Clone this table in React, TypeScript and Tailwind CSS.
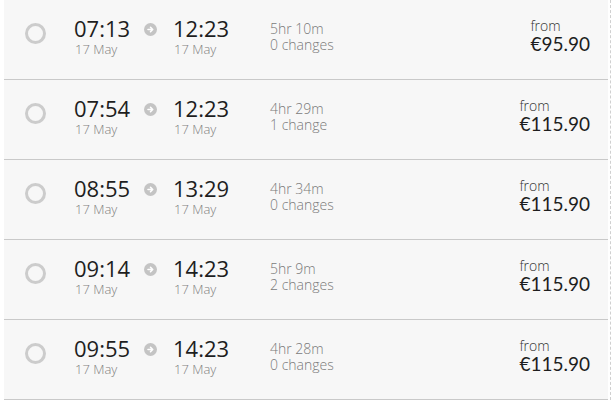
const journeys = [
  { dep: "07:13", arr: "12:23", dur: "5hr 10m", changes: "0 changes", price: "€95.90" },
  { dep: "07:54", arr: "12:23", dur: "4hr 29m", changes: "1 change", price: "€115.90" },
  { dep: "08:55", arr: "13:29", dur: "4hr 34m", changes: "0 changes", price: "€115.90" },
  { dep: "09:14", arr: "14:23", dur: "5hr 9m", changes: "2 changes", price: "€115.90" },
  { dep: "09:55", arr: "14:23", dur: "4hr 28m", changes: "0 changes", price: "€115.90" },
];

function ArrowDot() {
  return (
    <svg width="13" height="13" viewBox="0 0 13 13" className="mt-[8px]">
      <circle cx="6.5" cy="6.5" r="6.5" fill="#c4c4c4" />
      <path d="M4 6.5h4.5M6.5 4.3l2.2 2.2-2.2 2.2" stroke="#fff" strokeWidth="1.6" fill="none" strokeLinecap="round" strokeLinejoin="round" />
    </svg>
  );
}

function Row({ j }: { j: (typeof journeys)[number] }) {
  return (
    <div className="flex h-[80px] items-start border-b border-[#c9c9c9] pt-[15px]">
      <div className="ml-[21px] mt-[8px] h-[21px] w-[21px] rounded-full border-[3px] border-[#cccccc]" />
      <div className="ml-[28px] mt-[2px] flex w-[70px] flex-col">
        <span className="text-[22px] leading-[23px] text-[#1e1e1e]">{j.dep}</span>
        <span className="ml-[1px] mt-[2px] text-[13px] leading-[15px] font-light text-[#808080]">17 May</span>
      </div>
      <div>
        <ArrowDot />
      </div>
      <div className="ml-[16px] mt-[2px] flex w-[97px] flex-col">
        <span className="text-[22px] leading-[23px] text-[#1e1e1e]">{j.arr}</span>
        <span className="ml-[1px] mt-[2px] text-[13px] leading-[15px] font-light text-[#808080]">17 May</span>
      </div>
      <div className="mt-[6px] flex flex-col text-[14px] leading-[16px] font-light text-[#7a7a7a]">
        <span>{j.dur}</span>
        <span>{j.changes}</span>
      </div>
      <div className="mr-[18px] ml-auto flex flex-col items-start text-[#1e1e1e]">
        <span className="mt-[3px] text-[14px] leading-[15px] font-light text-[#333]">from</span>
        <span className="font-['Lato',sans-serif] text-[19px] leading-[21px]">{j.price}</span>
      </div>
    </div>
  );
}

export default function App() {
  return (
    <div className="flex h-[400px] w-[612px] bg-white font-['Open_Sans',sans-serif]">
      <div className="ml-[4px] w-[604px] bg-[#f7f7f7]">
        {journeys.map((j) => (
          <Row key={j.dep} j={j} />
        ))}
      </div>
      <div className="ml-[2px] w-[1px] border-l border-dashed border-[#d0d0d0]" />
    </div>
  );
}
